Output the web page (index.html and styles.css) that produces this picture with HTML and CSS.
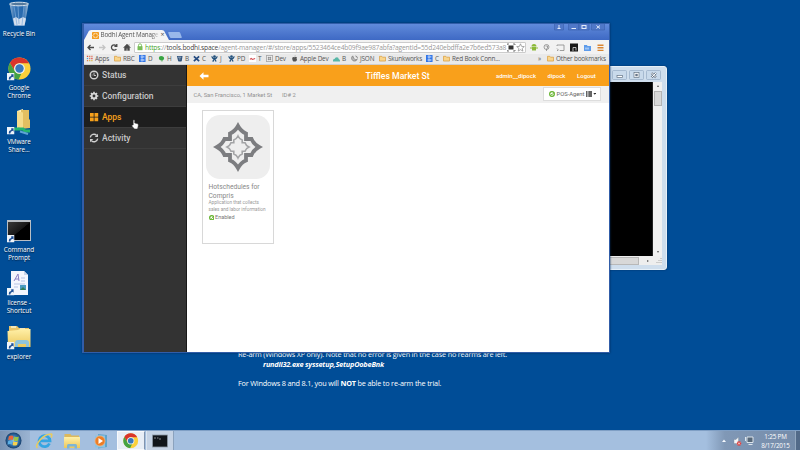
FILE: index.html
```html
<!DOCTYPE html>
<html lang="en">
<head>
<meta charset="utf-8">
<title>Bodhi Agent Manager</title>
<link rel="stylesheet" href="styles.css">
</head>
<body>
<svg class="defs" aria-hidden="true">
  <defs>
    <linearGradient id="gFold" x1="0" y1="0" x2="0" y2="1"><stop offset="0" stop-color="#fff0a8"/><stop offset="1" stop-color="#ecc75b"/></linearGradient>
    <linearGradient id="gBin" x1="0" y1="0" x2="1" y2="0"><stop offset="0" stop-color="#a5bdd6"/><stop offset=".25" stop-color="#3b78b8"/><stop offset=".7" stop-color="#2b6cb0"/><stop offset="1" stop-color="#b5cade"/></linearGradient>
    <linearGradient id="gCmd" x1="0" y1="0" x2="1" y2="1"><stop offset="0" stop-color="#3a3a3a"/><stop offset=".5" stop-color="#161616"/><stop offset=".52" stop-color="#000"/></linearGradient>
    <radialGradient id="gOrb"><stop offset="0" stop-color="#8fc3e8"/><stop offset=".65" stop-color="#2f6fa8"/><stop offset="1" stop-color="#183f6c"/></radialGradient>
  </defs>
  <symbol id="chrome" viewBox="0 0 24 24">
    <circle cx="12" cy="12" r="11.5" fill="#fbd03b"/>
    <path d="M2 6.2A11.5 11.5 0 0 1 22 6.4H12A5.6 5.6 0 0 0 7 14.5z" fill="#d9352c"/>
    <path d="M2 6.2 7.2 14.8A5.6 5.6 0 0 0 14 17.2L11 23.5A11.5 11.5 0 0 1 2 6.2z" fill="#44a244"/>
    <circle cx="12" cy="12" r="5.6" fill="#f1f5f9"/><circle cx="12" cy="12" r="4.4" fill="#3979bd"/>
  </symbol>
  <symbol id="arrow" viewBox="0 0 8 8"><rect width="8" height="8" fill="#eef4fa"/><path d="M2 7Q1.5 3.800 4.500 3.300V1.300H7V5L6 4Q3.500 4.500 3.500 7z" fill="#1d4f96"/></symbol>
  <symbol id="folder" viewBox="0 0 8 7"><path d="M.5 1h2.700l.8 1h3.500v4.400h-7z" fill="#f9d58c" stroke="#d99b38" stroke-width=".8"/></symbol>
  <symbol id="bbb" viewBox="0 0 8 8"><rect width="7.500" height="8" fill="#3075e8"/><path d="M2.500 1h1.800v2H2.500zM2.500 4.600h1.800v2.200H2.500zM5.500 1v2M5.500 4.600v2.200" fill="none" stroke="#dce9ff" stroke-width=".8"/></symbol>
  <symbol id="jira" viewBox="0 0 8 8"><circle cx="4" cy="1.700" r="1.500" fill="#23527d"/><path d="M.8 1.500Q1.500 4 4 4T7.200 1.500M4 4 2 7.500M4 4l1.800 3.500M2.500 4h3" fill="none" stroke="#23527d" stroke-width="1.500"/></symbol>
  <symbol id="check" viewBox="0 0 8 8"><circle cx="4" cy="4" r="3.100" fill="#fff" stroke="#65b32e" stroke-width="1.700"/><path d="M2.500 4 3.700 5.200 6.800 2" fill="none" stroke="#65b32e" stroke-width="1.200"/></symbol>
</svg>

<main class="desktop">
  <div class="shortcut recycle">
    <svg class="pic" viewBox="0 0 26 26"><path d="M3.500 3 8 25h10.500L22.500 3z" fill="url(#gBin)" opacity=".9"/><path d="M7 17.500l3-1.500 3 2 4-2 3 1.500-1.500 7H8.500z" fill="#d5dfed"/><path d="M8 5l3 19M18 5l-2 19M12 5l1 18" stroke="#7daada" stroke-width=".7"/><ellipse cx="13" cy="3" rx="9.500" ry="1.800" fill="#54799c" stroke="#d7e3ee"/></svg>
    <span>Recycle Bin</span>
  </div>
  <div class="shortcut chrome-link">
    <svg class="pic" viewBox="0 0 26 26"><use href="#chrome" x="2" y="2" width="23" height="23"/><use href="#arrow" x="1" y="18" width="7.500" height="7.500"/></svg>
    <span>Google<br>Chrome</span>
  </div>
  <div class="shortcut vmware">
    <svg class="pic" viewBox="0 0 26 26"><path d="M11 2 17 0v17l-6 2z" fill="#fff2bb"/><path d="M15 1h8v9l1 1v8l-9 1z" fill="#e3bf61"/><path d="M11 2 17 3.500V20l-6-2z" fill="#f5dc8c"/><path d="M8 20h9l2 2h5" stroke="#24b56e" stroke-width="3" fill="none"/><path d="M14 22.500l8 2.500" stroke="#5da4d4" stroke-width="2"/><use href="#arrow" x="1" y="18" width="7.500" height="7.500"/></svg>
    <span>VMware<br>Share...</span>
  </div>
  <div class="shortcut command">
    <svg class="pic" viewBox="0 0 26 26"><rect x="1" y="3" width="24" height="21" fill="#b9bfc5"/><rect x="2" y="5" width="22" height="18" fill="url(#gCmd)"/><use href="#arrow" x="1" y="18" width="7.500" height="7.500"/></svg>
    <span>Command<br>Prompt</span>
  </div>
  <div class="shortcut license">
    <svg class="pic" viewBox="0 0 26 26"><path d="M5 1h13l4 4v20H5z" fill="#f3f6fd"/><path d="M18 1v4h4" fill="#cad5e9"/><path d="M8 11 12 4l1 7M9 9h4" stroke="#8b80c4" fill="none"/><path d="M15 8h4M15 11h4M8 14h11M8 17h4" stroke="#b6c4e5"/><rect x="14" y="15" width="6" height="5" fill="#4a9bc2"/><path d="m14 20 3-3 3 3" fill="#327e58"/><use href="#arrow" x="1" y="18" width="7.500" height="7.500"/></svg>
    <span>license -<br>Shortcut</span>
  </div>
  <div class="shortcut explorer">
    <svg class="pic" viewBox="0 0 26 26"><path d="M3 2h8l2 2h10v8H3z" fill="#e9c56a"/><path d="M5 3h5M14 5h5" stroke="#f9f2d3" stroke-width="1.500"/><path d="M1.500 7 12 6l2-1h10.500v18H2z" fill="url(#gFold)"/><path d="M9 23v-4q0-3 3-3h8q3 0 3 3v4h-3v-3h-8v3z" fill="#8fc4dc"/><use href="#arrow" x="1" y="18" width="7.500" height="7.500"/></svg>
    <span>explorer</span>
  </div>

  <section class="wallpaper-note">
    <p class="w1">Re-arm (Windows XP only). Note that no error is given in the case no rearms are left.</p>
    <p class="cmdline">rundll32.exe syssetup,SetupOobeBnk</p>
    <p class="w3">For Windows 8 and 8.1, you will <b>NOT</b> be able to re-arm the trial.</p>
  </section>

  <section class="console">
    <header class="console-title">
      <svg viewBox="0 0 60 17"><g fill="#c9daeb" stroke="#95abc4" stroke-width=".7"><rect x="2.500" y="4.500" width="14" height="9" rx="1"/><rect x="19.500" y="4.500" width="14" height="9" rx="1"/><rect x="36.500" y="4.500" width="14" height="9" rx="1"/></g><g fill="#fff" stroke="#637285" stroke-width=".7"><rect x="7" y="9.500" width="5.500" height="2"/><rect x="24" y="6.500" width="5" height="5"/><rect x="25.700" y="8.200" width="1.700" height="1.700"/></g><path d="m41.500 7 4.500 4.500M46 7l-4.500 4.500" stroke="#6b7888" stroke-width="2.200"/><path d="m41.500 7 4.500 4.500M46 7l-4.500 4.500" stroke="#fff"/></svg>
    </header>
    <div class="console-body">
      <div class="screen"></div>
      <div class="vbar"><i class="up"></i><b></b><i class="down"></i></div>
    </div>
    <div class="hbar"><b></b><i></i><svg viewBox="0 0 6 6"><path d="M5 0v1M5 2v1M5 4v1M3 2v1M3 4v1M1 4v1" stroke="#aaa"/></svg></div>
  </section>

  <section class="browser">
    <header class="titlebar">
      <div class="tab"><svg viewBox="0 0 8 8"><rect width="8" height="8" rx="1" fill="#f39a1c"/><path d="m4 1 1 1h1v1l1 1-1 1v1H5L4 7 3 6H2V5L1 4l1-1V2h1z" fill="none" stroke="#fff3df" stroke-width=".9"/></svg><span class="tab-title">Bodhi Agent Manage</span><span class="x">×</span></div>
      <div class="newtab"></div>
      <svg class="winctl" viewBox="0 0 62 10"><g fill="#5078c8" stroke="#3b60ac" stroke-width=".6"><path d="M10.500 0v6h9V0M24.500 0v6h10.300V0M34.800 0v6h10.300V0M47.500 0v6h13V0"/></g><g fill="none" stroke="#e3ebfa" stroke-width="1"><path d="M15 1v1.500M13.500 4.500h3M15 2.500v1.500M27.500 4.500h4.500"/><rect x="38" y="1.500" width="4" height="3"/><path d="m52.500 1.500 3.500 3M56 1.500l-3.500 3"/></g></svg>
    </header>
    <div class="toolbar">
      <svg class="nav" viewBox="0 0 50 13"><g fill="none" stroke="#4a4a4a" stroke-width="1.300"><path d="M10 6.500H4M6.500 4 4 6.500 6.500 9"/><path d="M15 6.500h6M18.500 4 21 6.500 18.500 9" stroke="#c4c4c4"/><path d="M32 4.500a2.700 2.700 0 1 0 .4 3.500M32.800 3v2.300h-2.400"/></g><path d="M39.500 6.500 43 3l3.500 3.500h-1V9.500h-2v-2h-1v2h-2v-3zM45 3v2" fill="#4a4a4a" stroke="#4a4a4a" stroke-width=".4"/></svg>
      <div class="address">
        <svg class="lock" viewBox="0 0 6 8"><path d="M1.500 4V2.300a1.400 1.400 0 0 1 3 0V4" fill="none" stroke="#78bd57" stroke-width=".9"/><rect x=".5" y="3.200" width="5" height="4" fill="#78bd57"/></svg>
        <span class="url"><span class="https">https</span>://<span class="host">tools.bodhi.space</span>/agent-manager/#/store/apps/5523464ce4b09f9ae987abfa?agentId=55d240ebdffa2e7b6ed573a8</span>
        <svg class="marks" viewBox="0 0 18 9"><path d="M0 2V1h2M6 1h2v1M0 7v1h2M6 8h2V7" fill="none" stroke="#555" stroke-width=".8"/><rect x="1.500" y="2.500" width="5" height="4" fill="#333"/><path d="m13.500.8 1.100 2.600 2.700.2-2.100 1.800.7 2.700-2.400-1.400-2.300 1.400.7-2.700-2.200-1.800 2.700-.2z" fill="#fff" stroke="#888" stroke-width=".7"/></svg>
      </div>
      <svg class="ext" viewBox="0 0 80 13"><g fill="#8bb938"><path d="M5.500 5.500a2.500 2.500 0 0 1 5 0zM6 6h4v3.500H6z"/><path d="M5 6v2M11 6v2" stroke="#8bb938" stroke-width="1"/></g><g fill="none" stroke="#888" stroke-width=".8"><circle cx="20.500" cy="6" r="2.500"/><path d="M19.500 5h2v2l-1 1v2"/><path d="M31 5V4h7v5.500h-4M31 9.500h1M31 7.500l2 2"/></g><rect x="44" y="2.500" width="8" height="8" fill="#171717"/><path d="M47 10V6.500h3v3" fill="none" stroke="#ddd" stroke-width=".8"/><path d="M58 4h3l.5 1H65v5h-7z" fill="#5d9bea"/><path d="M60 6.500v2M62 6.500v2" stroke="#e2efff"/><path d="M71.500 4.200h6M71.500 6.800h6M71.500 9.400h6" stroke="#d98532" stroke-width="1.400"/></svg>
    </div>
    <nav class="bookmarks">
      <a><svg viewBox="0 0 8 8"><g stroke-width="1.500"><path d="M1 1.500h1.500M6 4h1.500" stroke="#db4c43"/><path d="M3.500 1.500H5M1 6.500h1.500" stroke="#dc804d"/><path d="M6 1.500h1.500M3.500 4H5" stroke="#e27966"/><path d="M1 4h1.500" stroke="#4e9fce"/><path d="M3.500 6.500H5M6 6.500h1.500" stroke="#dbb64b"/></g></svg>Apps</a>
      <a><svg viewBox="0 0 8 8"><use href="#folder" width="8" height="8"/></svg>RBC</a>
      <a><svg viewBox="0 0 8 8"><use href="#bbb"/></svg>D</a>
      <a><svg viewBox="0 0 8 8"><path d="M1 3Q1 1 3.500 1 7 1 7 4 6 7 4 6 1 6 1 3zM4 5h1v2.500H4z" fill="#38a443"/></svg>H</a>
      <a><svg viewBox="0 0 8 8"><path d="M1 1.200h6.500L6.500 7q-2 1-4 0z" fill="#2f527b"/><path d="M2 2.500h4M3.200 4.500h2" stroke="#dce6ef" stroke-width=".7"/></svg>B</a>
      <a><svg viewBox="0 0 8 8"><path d="m1 1.500 6 5.500M7 1.500 1 7" stroke="#244a7f" stroke-width="2"/></svg>C</a>
      <a><svg viewBox="0 0 8 8"><use href="#jira"/></svg>J</a>
      <a><svg viewBox="0 0 8 8"><use href="#jira"/></svg>PD</a>
      <a><svg viewBox="0 0 8 8"><rect width="8" height="8" fill="#fff"/><path d="M1 5 2.500 4l1.500 1 3-1" fill="none" stroke="#d4494e" stroke-width="1.200"/></svg>T</a>
      <a><svg viewBox="0 0 8 8"><rect x=".5" y=".5" width="7" height="7" fill="#eee" stroke="#aaa"/><path d="M3 2v4M5 2v4M2 3h4M2 5h4" stroke="#777" stroke-width=".7"/></svg>Dev</a>
      <a><svg viewBox="0 0 8 8"><path d="M4 2.500Q6 1.500 6.800 3 5.700 4 7 5.500 6 8 4.500 7.300 3 8 2 6.500.5 3 2.500 2.300zM4 2Q4 .5 5.300.2" fill="#555"/></svg>Apple Dev</a>
      <a><svg viewBox="0 0 8 8"><path d="M0 6q1-2 2-1.500 0-2 2.500-2 2 0 2 2Q8 5 8 6.500v1H0z" fill="#59b7a7"/></svg>B</a>
      <a><svg viewBox="0 0 8 8"><path d="M2 1a3.300 3.300 0 1 0 5 4Q4 7 2 1zM5 1a3 3 0 0 1 2.500 3" fill="#bbb" stroke="#666" stroke-width=".7"/></svg>JSON</a>
      <a><svg viewBox="0 0 8 8"><use href="#folder" width="8" height="8"/></svg>Skunkworks</a>
      <a><svg viewBox="0 0 8 8"><use href="#bbb"/></svg>C</a>
      <a><svg viewBox="0 0 8 8"><use href="#folder" width="8" height="8"/></svg>Red Book Conn...</a>
      <a class="more">»</a>
      <a><svg viewBox="0 0 8 8"><use href="#folder" width="8" height="8"/></svg>Other bookmarks</a>
    </nav>
    <div class="page">
      <aside class="side">
        <a><svg viewBox="0 0 10 10"><circle cx="5" cy="5" r="3.800" fill="none" stroke="#d0d0d0" stroke-width="1.400"/><path d="M5 2.500V5.500M5 5.500h2M3 4.500v1" stroke="#d0d0d0" stroke-width=".9" fill="none"/></svg>Status</a>
        <a><svg viewBox="0 0 10 10"><circle cx="5" cy="5" r="2.400" fill="none" stroke="#d8d8d8" stroke-width="1.900"/><path d="M5 .7v1.500M5 7.800v1.500M.7 5h1.500M7.800 5h1.500M2 2l1 1M7 7l1 1M8 2 7 3M3 7 2 8" stroke="#d8d8d8" stroke-width="1.600"/></svg>Configuration</a>
        <a class="on"><svg viewBox="0 0 10 10"><path d="M1 1h3.700v3.700H1zM5.500 1h3.700v3.700H5.500zM1 5.500h3.700v3.700H1zM5.500 5.500h3.700v3.700H5.500z" fill="#f7a11b"/></svg>Apps</a>
        <a><svg viewBox="0 0 10 10"><path d="M1.300 4.300A3.700 3.700 0 0 1 7.500 2.300M8.700 5.700A3.700 3.700 0 0 1 2.500 7.700" fill="none" stroke="#d0d0d0" stroke-width="1.400"/><path d="M9 .7V4H5.700zM1 9.300V6h3.300z" fill="#d0d0d0"/></svg>Activity</a>
      </aside>
      <div class="content">
        <header class="orange">
          <svg class="back" viewBox="0 0 10 8"><path d="M.5 4 4.500.3v2.500h5v2.400h-5v2.500z" fill="#fff"/></svg>
          <h1>Tiffles Market St</h1>
          <nav><a class="u1">admin__dipock</a><a class="u2">dipock</a><a class="u3">Logout</a></nav>
        </header>
        <div class="crumbs">
          <span class="place">CA, San Francisco, 1 Market St</span><span class="ident">ID# 2</span>
          <button class="agent"><svg class="ok" viewBox="0 0 8 8"><use href="#check"/></svg><span>POS-Agent</span><svg class="list" viewBox="0 0 10 6"><path d="M0 1h1.500M2.300 1H6M0 3h1.500M2.300 3H6M0 5h1.500M2.300 5H6" stroke="#333" stroke-width="1.300"/><path d="M7.300 2h3L8.800 3.800z" fill="#333"/></svg></button>
        </div>
        <article class="card">
          <svg class="logo" viewBox="0 0 64 64"><rect width="64" height="64" rx="14" fill="#eee"/><g transform="translate(32 32)" fill="none" stroke-linejoin="miter"><path d="M0-21Q3-15.500 8-13.500V-8H13.500Q15.500-3 21 0Q15.500 3 13.500 8H8V13.500Q3 15.500 0 21Q-3 15.500-8 13.500V8H-13.500Q-15.500 3-21 0Q-15.500-3-13.500-8H-8V-13.500Q-3-15.500 0-21z" stroke="#7c7d80" stroke-width="3.800"/><path d="M0-11Q1.500-7.800 4.200-7V-4.200H7Q7.800-1.500 11 0Q7.800 1.500 7 4.200H4.200V7Q1.500 7.800 0 11Q-1.500 7.800-4.200 7V4.200H-7Q-7.800 1.500-11 0Q-7.800-1.500-7-4.200H-4.200V-7Q-1.500-7.800 0-11z" stroke="#a3a4a6" stroke-width="1.600"/></g></svg>
          <h2>Hotschedules for<br>Compris</h2>
          <p>Application that collects<br>sales and labor information</p>
          <div class="enabled"><svg viewBox="0 0 8 8"><use href="#check"/></svg>Enabled</div>
        </article>
      </div>
    </div>
  </section>

  <svg class="pointer" viewBox="0 0 8 11"><path d="M2.200 6V1.300q.8-1 1.500 0V4l3 .8q.8.500.6 2L6.500 10h-3L.8 7Q.8 5.500 2.200 6z" fill="#fff" stroke="#333" stroke-width=".5"/></svg>

  <footer class="taskbar">
    <div class="start"><svg viewBox="0 0 18 18"><circle cx="9" cy="9" r="8.500" fill="url(#gOrb)"/><g transform="translate(-1.300 -1.800) scale(1.200)"><path d="M4.500 5.300q2-1.300 4-.3l-.6 3.500q-2-1-4 .2z" fill="#eb6538"/><path d="M9.300 5.400q2 1 4 0l-.7 3.500q-2 1-4 0z" fill="#98c447"/><path d="M3.800 9.600q2-1.200 3.900-.2l-.6 3.200q-2-1-3.800.2z" fill="#5aafe5"/><path d="M8.400 9.800q2 1 4 0l-.7 3.200q-2 1-3.900 0z" fill="#f6d14d"/></g></svg></div>
    <div class="task ie"><svg viewBox="0 0 18 18"><path d="M14.500 11.500A5.500 5.500 0 1 1 15 8.800H5.500" fill="none" stroke="#35a5e2" stroke-width="2.800"/><path d="M2.500 16Q0 14 5 8T16.500 2q1 1-.5 3.500" fill="none" stroke="#e8cb61" stroke-width="1.500"/></svg></div>
    <div class="task"><svg viewBox="0 0 18 18"><path d="M1.500 2h6l1 1.500h7.500V8H1.500z" fill="#dcb95e"/><path d="M1 5h16v11H1z" fill="url(#gFold)"/><path d="M4 16.500v-3q0-1.500 1.500-1.500h7q1.500 0 1.500 1.500v3h-2.500v-2h-5v2z" fill="#7eb5d5"/></svg></div>
    <div class="task media"><svg viewBox="0 0 18 18"><path d="m6 2 9 1v12l-9 1.500z" fill="#61a4cb"/><path d="M3 3.500h10v12H3z" fill="#8cc4e3"/><circle cx="8" cy="9" r="5" fill="#ed7d25" stroke="#f5b27b" stroke-width=".7"/><path d="m6.500 6 4.500 3-4.500 3z" fill="#fff"/></svg></div>
    <div class="task active"><svg viewBox="0 0 18 18"><use href="#chrome" x="1" y="1" width="15.500" height="15.500"/></svg></div>
    <div class="task open"><svg viewBox="0 0 18 18"><rect x="1.500" y="3" width="15" height="12" fill="#11151a" stroke="#8c98a5" stroke-width=".8"/><path d="M3 6h2M6 6h1.500M8 7h2" stroke="#aaa" stroke-width=".8"/></svg></div>
    <div class="tray">
      <svg viewBox="0 0 36 14"><path d="m2 8 2-2.500L6 8z" fill="#f6faff"/><path d="M14 5.500h2l2.500-2.500v8.500L16 9.500h-2z" fill="#f2f5f8" stroke="#7d8b9a" stroke-width=".4"/><circle cx="19" cy="9.500" r="2.300" fill="#d64546"/><path d="m18 8.500 2 2M20 8.500l-2 2" stroke="#fff" stroke-width=".7"/><path d="M27 3h6v5.500h-6zM25.500 3v4M28.500 10.500h4" fill="#58697a" stroke="#e8eef4" stroke-width=".9"/></svg>
      <div class="clock"><span class="time">1:25 PM</span><span class="date">8/17/2015</span></div>
      <i class="peek"></i>
    </div>
  </footer>
</main>
</body>
</html>
```
FILE: styles.css
```css
* { box-sizing: border-box; }
body { margin: 0; overflow: hidden; }
svg { display: block; flex: none; }
.defs { position: absolute; width: 0; height: 0; }
.desktop {
  position: relative; width: 800px; height: 450px; overflow: hidden;
  background: #004d97;
  font-family: "Open Sans", "Noto Sans", sans-serif;
}

/* Desktop shortcuts */
.shortcut {
  position: absolute; left: -6px; width: 50px;
  display: flex; flex-direction: column; align-items: center;
  font-size: 6.4px; line-height: 8px; letter-spacing: -0.1px;
  color: #fff; text-align: center; text-shadow: 0 1px 1px #002040;
}
.pic { width: 26px; height: 26px; margin-bottom: 3px; }
.recycle { top: 1px; }
.chrome-link { top: 55px; }
.vmware { top: 109px; }
.command { top: 217px; }
.license { top: 270px; }
.explorer { top: 324px; }

.wallpaper-note { position: absolute; left: 238px; top: 349px; color: #fff; font-size: 7.3px; line-height: 10px; letter-spacing: -0.19px; white-space: nowrap; }
.wallpaper-note p { margin: 0; }
.wallpaper-note .cmdline { margin: 0 0 9px 25px; font-weight: bold; font-style: italic; letter-spacing: -0.19px; }

/* Console window behind the browser */
.console {
  position: absolute; left: 560px; top: 66px; width: 107px; height: 204px;
  display: flex; flex-direction: column;
  background: #cfdeed; border: 1px solid #e7f0f8; border-radius: 3px; padding: 0 4px 4px 0;
  box-shadow: 0 0 2px #022f60;
}
.console-title { height: 15px; display: flex; justify-content: flex-end; }
.console-title svg { width: 60px; height: 17px; margin-right: -8px; margin-top: -1px; }
.console-body { flex: 1; display: flex; min-height: 0; }
.screen { flex: 1; background: #000; border-right: 1px solid #222; }
.vbar { width: 9px; background: #f1f1f1; display: flex; flex-direction: column; align-items: center; }
.vbar b { width: 8px; height: 15px; background: #d9d9d9; border: 1px solid #b4b4b4; margin-top: 4px; }
.vbar i { width: 0; height: 0; border: 1.5px solid transparent; }
.vbar .up { border-bottom: 2px solid #555; margin-top: 2px; }
.vbar .down { border-top: 2px solid #555; margin: auto 0 2px; }
.hbar { height: 9px; background: #eee; display: flex; align-items: center; }
.hbar b { width: 80px; height: 8px; background: #d8d8d8; border: 1px solid #b8b8b8; }
.hbar i { border: 1.5px solid transparent; border-left: 2px solid #555; margin-left: 8px; }
.hbar svg { width: 6px; height: 6px; margin-left: 6px; }

/* Browser */
.browser {
  position: absolute; left: 82px; top: 23px; width: 528px; height: 330px;
  display: flex; flex-direction: column;
  border: 1px solid #315da8; border-width: 1px 1px 1px 2px; background: #4873cb;
  box-shadow: 0 0 2px #012b5a;
}
.titlebar { height: 16px; flex: none; display: flex; align-items: flex-end; background: linear-gradient(#618bdb, #3e69c4); }
.tab {
  width: 85px; height: 10px; padding: 0 0 0 8px; display: flex; align-items: center;
  background: #f5f5f5; clip-path: polygon(0 100%, 5px 8%, 7px 0, 78px 0, 80px 8%, 100% 100%);
  font-size: 6.3px; line-height: 10px; color: #555;
}
.tab svg { width: 7px; height: 7px; margin-right: 1.500px; }
.tab-title { width: 59px; white-space: nowrap; letter-spacing: -0.17px; -webkit-mask-image: linear-gradient(90deg, #000 85%, transparent); }
.x { margin-left: 1px; font-size: 7px; }
.newtab { width: 12px; height: 6px; margin: 0 0 2px; background: #99b8ea; transform: skewX(20deg); border-radius: 1px; }
.winctl { width: 62px; height: 10px; margin: 0 3px 6px auto; }
.toolbar { height: 14px; flex: none; display: flex; align-items: center; background: #f2f2f2; }
.nav { width: 50px; height: 13px; }
.address { width: 392px; height: 11px; display: flex; align-items: center; background: #fff; border: 1px solid #ccc; border-radius: 1px; padding-left: 2px; }
.lock { width: 6px; height: 8px; }
.url { width: 363px; margin-left: 2px; color: #999; font-size: 6.7px; line-height: 9px; white-space: nowrap; letter-spacing: -0.178px; }
.https { color: #4aa42d; }
.host { color: #444; }
.marks { width: 18px; height: 9px; }
.ext { width: 80px; height: 13px; }
.bookmarks {
  height: 11px; flex: none; padding: 0 0 1px 2px; background: #e9e9e9; border-bottom: 1px solid #cfcfcf;
  display: grid; align-items: center;
  grid-template-columns: 28px 25px 19px 18px 17px 18px 17px 21px 17px 25px 42px 18px 28px 47px 17px 95px 9px 60px;
  font-size: 6.4px; line-height: 9px; letter-spacing: -0.18px; color: #555; white-space: nowrap;
}
.bookmarks a { display: flex; align-items: center; }
.bookmarks svg { width: 7px; height: 7px; margin-right: 2px; }

.page { flex: 1; display: flex; min-height: 0; font-family: Roboto, "Liberation Sans", sans-serif; }
.side { width: 103px; background: #333; border-right: 1px solid #181818; }
.side a { height: 21px; display: flex; align-items: center; padding-left: 4.500px; font-size: 8.500px; font-weight: 500; color: #c8c8c8; border-bottom: 1px solid #3d3d3d; }
.side svg { width: 10px; height: 10px; margin-right: 3.500px; }
.side .on { background: #1e1e1e; color: #f7a11b; }
.content { flex: 1; background: #fff; }
.orange { height: 21px; background: #f9a01b; display: flex; align-items: center; color: #fff; }
.back { width: 10px; height: 8px; margin-left: 12px; }
.orange h1 { margin: 0 0 0 156.500px; width: 130.500px; font-size: 8.700px; font-weight: 500; }
.orange nav { display: flex; font-size: 6px; font-weight: 500; }
.u1 { width: 51.500px; }
.u2 { width: 29.500px; }
.crumbs { height: 17px; background: #f0f0f0; display: flex; align-items: center; padding: 0 8px 0 6.500px; font-size: 5.8px; color: #929292; }
.place { width: 88.500px; }
.agent { margin-left: auto; width: 58px; height: 14px; margin-top: -1px; padding: 0 3px 0 4.500px; display: flex; align-items: center; background: #fff; border: 1px solid #ddd; font: 5.8px Roboto, sans-serif; color: #666; }
.ok { width: 6px; height: 6px; margin-right: 1px; }
.agent span { width: 30px; white-space: nowrap; }
.list { width: 10px; height: 6px; }
.card { width: 72px; height: 134px; margin: 7px 0 0 15px; padding: 4px 3px 0; border: 1px solid #d8d8d8; color: #999; }
.logo { width: 64px; height: 64px; }
.card h2 { margin: 4px 0 0 2.500px; font-size: 6.7px; line-height: 9.200px; font-weight: 400; color: #888; white-space: nowrap; }
.card p { margin: -1px 0 0 2.500px; font-size: 4.700px; line-height: 6.200px; white-space: nowrap; }
.enabled { display: flex; align-items: center; margin: 1.500px 0 0 2.500px; font-size: 5.500px; line-height: 6px; color: #777; }
.enabled svg { width: 5.500px; height: 5.500px; margin-right: 1px; }
.pointer { position: absolute; left: 131px; top: 119px; width: 8px; height: 11px; }

/* Taskbar */
.taskbar { position: absolute; left: 0; bottom: 0; width: 800px; height: 20px; display: flex; align-items: center; background: #a4bfdf; border-top: 1px solid #7f9fc5; }
.start { width: 30px; height: 19px; padding-left: 5px; display: flex; align-items: center; background: linear-gradient(90deg, #7892b3, #9bb4d2); }
.taskbar svg { width: 18px; height: 18px; }
.start svg { width: 17px; height: 17px; }
.task { width: 28px; height: 19px; display: flex; justify-content: center; align-items: center; }
.ie { width: 28px; }
.media { width: 30px; }
.active { background: #e8eef6; border: 1px solid #f7f9fc; border-right-color: #8194ae; margin-left: 1px; }
.open { background: #c5d3e5; border: 1px solid #dce6f1; border-width: 0 1px; border-right-color: #8ba2bd; margin-left: 1px; }
.tray { margin-left: auto; width: 94px; height: 19px; display: flex; align-items: center; padding-left: 14px; background: linear-gradient(90deg, #a4bfdf, #8098b6 20%, #748ba9); }
.taskbar .tray svg { width: 36px; height: 14px; }
.clock { width: 37px; display: flex; flex-direction: column; align-items: center; margin-left: 1px; font-size: 6.300px; line-height: 9px; color: #fff; letter-spacing: -0.150px; }
.peek { width: 5px; height: 19px; margin-left: auto; background: #526a89; border-left: 1px solid #93a8c0; }
```
